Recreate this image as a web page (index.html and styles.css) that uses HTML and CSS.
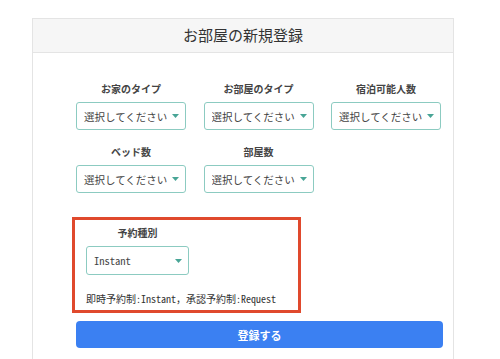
FILE: index.html
```html
<!DOCTYPE html>
<html lang="ja">
<head>
    <meta charset="UTF-8">
    <meta name="viewport" content="width=device-width, initial-scale=1.0">
    <title>お部屋の新規登録</title>
    <link rel="stylesheet" href="styles.css">
</head>
<body>
    <div class="card">
        <div class="card-header">お部屋の新規登録</div>

        <form class="card-body" id="roomForm">
            <div class="field-grid">
                <div class="field">
                    <label for="houseType">お家のタイプ</label>
                    <select id="houseType"><option>選択してください</option></select>
                </div>
                <div class="field">
                    <label for="roomType">お部屋のタイプ</label>
                    <select id="roomType"><option>選択してください</option></select>
                </div>
                <div class="field">
                    <label for="capacity">宿泊可能人数</label>
                    <select id="capacity"><option>選択してください</option></select>
                </div>
                <div class="field">
                    <label for="beds">ベッド数</label>
                    <select id="beds"><option>選択してください</option></select>
                </div>
                <div class="field">
                    <label for="rooms">部屋数</label>
                    <select id="rooms"><option>選択してください</option></select>
                </div>
            </div>

            <div class="booking-box">
                <div class="field">
                    <label for="bookingType">予約種別</label>
                    <select id="bookingType" class="mono">
                        <option>Instant</option>
                        <option>Request</option>
                    </select>
                </div>
                <p class="note">即時予約制:Instant，承認予約制:Request</p>
            </div>

            <button type="button">登録する</button>
        </form>
    </div>
</body>
</html>
```

FILE: styles.css
```css
/* CSS Styles */
body {
    margin: 0;
    background-color: #ffffff;
    font-family: "Noto Sans CJK JP", "Liberation Sans", sans-serif;
    color: #333333;
}

.card {
    margin: 18px 0 0 32px;
    width: 422px;
    height: 341px;
    border: 1px solid #e4e4e4;
    border-bottom: none;
    box-sizing: border-box;
    overflow: hidden;
}

.card-header {
    height: 33px;
    line-height: 32px;
    background-color: #f6f6f6;
    border-bottom: 1px solid #e4e4e4;
    text-align: center;
    font-size: 15px;
    color: #333333;
}

.card-body {
    padding: 29px 12px 0 43px;
}

.field-grid {
    display: grid;
    grid-template-columns: repeat(3, 110px);
    justify-content: space-between;
    row-gap: 15px;
}

.field {
    display: flex;
    flex-direction: column;
    align-items: center;
}

label {
    display: block;
    margin-bottom: 6px;
    font-size: 10px;
    line-height: 14px;
    font-weight: bold;
    color: #444444;
}

select {
    appearance: none;
    -webkit-appearance: none;
    width: 110px;
    height: 28px;
    padding: 0 0 0 7px;
    border: 1px solid #8ccbc1;
    border-radius: 3px;
    background-color: #ffffff;
    background-image: url("data:image/svg+xml;utf8,<svg xmlns='http://www.w3.org/2000/svg' width='7' height='4'><path d='M0 0h7L3.5 4z' fill='%2348a596'/></svg>");
    background-repeat: no-repeat;
    background-position: right 6px center;
    font-family: "Noto Sans CJK JP", sans-serif;
    font-size: 10.5px;
    color: #444444;
}

.booking-box {
    width: 229px;
    margin: 24px 0 0 -4px;
    padding: 6px 11px 4px;
    border: 3px solid #e0492d;
    box-sizing: border-box;
}

.booking-box .field {
    width: 103px;
}

.booking-box select {
    width: 103px;
    height: 29px;
}

.mono,
.note {
    font-family: "Noto Sans Mono CJK JP", "DejaVu Sans Mono", "Noto Sans CJK JP", monospace;
}

.note {
    margin: 17px 0 0;
    font-size: 10px;
    line-height: 14px;
    white-space: nowrap;
    color: #333333;
}

button {
    display: block;
    width: 367px;
    height: 27px;
    margin-top: 8px;
    border: none;
    border-radius: 4px;
    background-color: #3b80f2;
    color: #ffffff;
    font-family: "Noto Sans CJK JP", sans-serif;
    font-size: 11px;
    font-weight: bold;
    cursor: pointer;
}
```
